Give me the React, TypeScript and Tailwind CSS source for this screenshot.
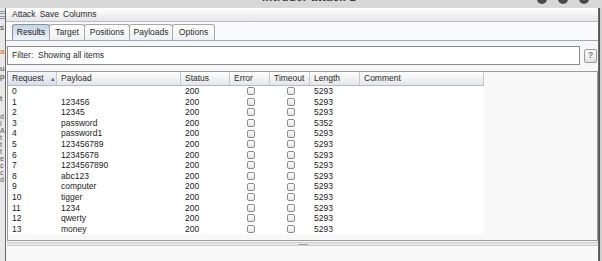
import React from 'react';

const rows: [string, string, string][] = [
  ['0', '', '5293'],
  ['1', '123456', '5293'],
  ['2', '12345', '5293'],
  ['3', 'password', '5352'],
  ['4', 'password1', '5293'],
  ['5', '123456789', '5293'],
  ['6', '12345678', '5293'],
  ['7', '1234567890', '5293'],
  ['8', 'abc123', '5293'],
  ['9', 'computer', '5293'],
  ['10', 'tigger', '5293'],
  ['11', '1234', '5293'],
  ['12', 'qwerty', '5293'],
  ['13', 'money', '5293'],
];

const tabs = [
  { label: 'Results', w: 'w-[38px]', active: true },
  { label: 'Target', w: 'w-[36px]', active: false },
  { label: 'Positions', w: 'w-[46px]', active: false },
  { label: 'Payloads', w: 'w-[44px]', active: false },
  { label: 'Options', w: 'w-[43px]', active: false },
];

const Checkbox: React.FC = () => (
  <div className="w-[8px] h-[8px] rounded-[2px] border border-[#8e8e8e] bg-gradient-to-b from-white to-[#e4e4e4]" />
);

const App: React.FC = () => {
  return (
    <div className="w-[602px] h-[261px] overflow-hidden flex flex-col bg-[#f7f7f7] text-[#1c1c1c] font-['Liberation_Sans','Arial',sans-serif] text-[8.5px] leading-none">
      {/* title bar, mostly cut off */}
      <div className="h-[8px] shrink-0 bg-[#d8d8d8] flex items-end overflow-hidden relative">
        <div className="absolute left-[262px] top-[-8px] text-[11px] font-bold text-[#3a3a3a] tracking-[0.5px]">
          Intruder attack 1
        </div>
        <div className="absolute left-[537px] top-[-6px] flex gap-[11px]">
          <div className="w-[10px] h-[10px] rounded-full bg-[#4a4a4a]" />
          <div className="w-[10px] h-[10px] rounded-full bg-[#4a4a4a]" />
          <div className="w-[10px] h-[10px] rounded-full bg-[#4a4a4a]" />
        </div>
      </div>

      <div className="flex flex-1 min-h-0">
        {/* window behind, on the left */}
        <div className="w-[5px] shrink-0 bg-[#e8e8e8] flex flex-col text-[8px] overflow-hidden">
          <div className="h-[3px] mt-[3px] border-y border-[#8a96a8]" />
          <div className="h-[3px] mt-[2px] border-y border-[#8a96a8]" />
          <div className="mt-[5px] text-[#333]">s</div>
          <div className="mt-[16px] text-[#e06020]">a</div>
          <div className="mt-[9px] text-[#333]">u</div>
          <div className="mt-[0px] text-[#333]">p</div>
          <div className="mt-[14px] text-[#333]">t</div>
          <div className="mt-[10px] text-[#555] text-[7px] leading-[7px]">
            d<br />l<br />A<br />t<br />t<br />t<br />e<br />c<br />c<br />d
          </div>
        </div>

        {/* main window */}
        <div className="w-[594px] shrink-0 flex flex-col border-l border-r border-[#6a6a6a]">
          {/* menu bar */}
          <div className="h-[14px] shrink-0 bg-gradient-to-b from-white to-[#e6e6e8] border-b border-[#b8bcc4] flex items-center pl-[6px] gap-[4px] text-[#2a2a2a]">
            <span>Attack</span>
            <span>Save</span>
            <span>Columns</span>
          </div>

          {/* tabs */}
          <div className="h-[19px] shrink-0 bg-[#fafafa] flex items-end pl-[6px] border-b border-[#9aabc0]">
            {tabs.map((t) => (
              <div
                key={t.label}
                className={`${t.w} h-[16px] flex items-center justify-center rounded-t-[3px] border border-b-0 ${
                  t.active
                    ? 'border-[#7f93ab] bg-gradient-to-b from-[#c6d4e4] to-[#eef3f8] text-[#1a1a1a]'
                    : 'border-[#a8a8a8] bg-gradient-to-b from-white to-[#f0f0f0] text-[#2a2a2a]'
                } -ml-px first:ml-0`}
              >
                {t.label}
              </div>
            ))}
          </div>

          {/* content */}
          <div className="flex-1 flex flex-col pl-[1px] pt-[5px]">
            <div className="flex items-center gap-[4px] h-[19px]">
              <div className="w-[573px] h-[19px] border border-[#8a8a8a] bg-white flex items-center pl-[4px] text-[#2a2a2a]">
                Filter:&nbsp; Showing all items
              </div>
              <div className="w-[13px] h-[14px] rounded-[2px] border border-[#9a9a9a] bg-gradient-to-b from-white to-[#e0e0e0] flex items-center justify-center text-[9px] font-bold text-[#808080]">
                ?
              </div>
            </div>

            {/* table */}
            <div className="mt-[6px] w-[591px] h-[170px] border border-[#9c9c9c] bg-[#f8f8f8] flex flex-col">
              <div className="w-[476px] h-[14px] flex bg-gradient-to-b from-white to-[#e4e6ea] border-b border-[#b6bac2] text-[#2a2a2a]">
                <div className="w-[49px] flex items-center pl-[4px] border-r border-[#c4c8ce] bg-gradient-to-b from-[#f4f6fa] to-[#d8dee8]">
                  <span>Request</span>
                  <span className="ml-[6px] text-[6px] text-[#4d6b9a]">▲</span>
                </div>
                <div className="w-[124px] flex items-center pl-[4px] border-r border-[#c4c8ce]">Payload</div>
                <div className="w-[49px] flex items-center pl-[4px] border-r border-[#c4c8ce]">Status</div>
                <div className="w-[40px] flex items-center pl-[4px] border-r border-[#c4c8ce]">Error</div>
                <div className="w-[40px] flex items-center pl-[4px] border-r border-[#c4c8ce]">Timeout</div>
                <div className="w-[50px] flex items-center pl-[4px] border-r border-[#c4c8ce]">Length</div>
                <div className="w-[124px] flex items-center pl-[4px] border-r border-[#c4c8ce]">Comment</div>
              </div>
              <div className="w-[476px] bg-white">
                {rows.map(([id, payload, len]) => (
                  <div key={id} className="h-[10.6px] flex items-center">
                    <div className="w-[49px] pl-[4px]">{id}</div>
                    <div className="w-[124px] pl-[4px]">{payload}</div>
                    <div className="w-[49px] pl-[4px]">200</div>
                    <div className="w-[40px] flex justify-center pl-[2px]">
                      <Checkbox />
                    </div>
                    <div className="w-[40px] flex justify-center pl-[1px]">
                      <Checkbox />
                    </div>
                    <div className="w-[50px] pl-[4px]">{len}</div>
                    <div className="w-[124px]" />
                  </div>
                ))}
              </div>
            </div>

            {/* splitter */}
            <div className="mt-[1px] w-[591px] h-[4px] border-y border-[#d0d0d0] bg-[#e6e6e6] flex justify-center items-center">
              <div className="w-[10px] h-[1px] bg-[#a0a0a0]" />
            </div>
            <div className="flex-1 bg-[#f8f8f8]" />
          </div>
        </div>

        {/* right edge */}
        <div className="flex-1 bg-[#d0d0d0] border-l border-[#555]" />
      </div>
    </div>
  );
};

export default App;
